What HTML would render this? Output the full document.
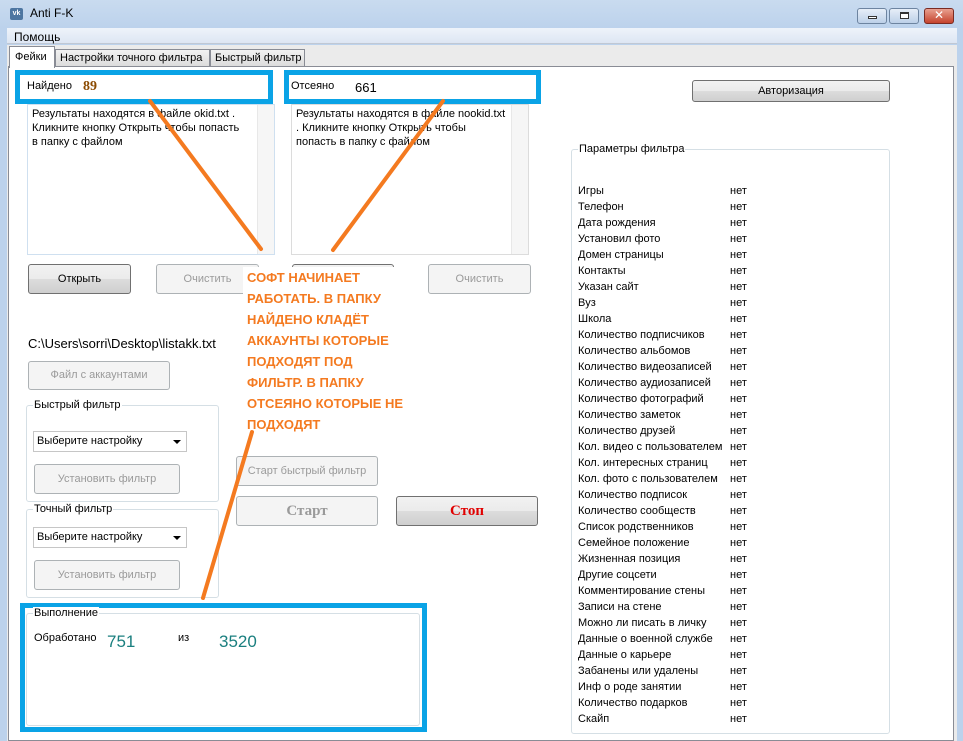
<!DOCTYPE html>
<html><head><meta charset="utf-8"><style>
*{box-sizing:border-box;margin:0;padding:0}
body{width:963px;height:741px;position:relative;overflow:hidden;background:#bcd2ec;font-family:"Liberation Sans","DejaVu Sans",sans-serif;font-size:11px;color:#000}
.a{position:absolute;white-space:nowrap}
.btn{position:absolute;border:1px solid #707070;border-radius:3px;background:linear-gradient(#f2f2f2,#ebebeb 50%,#dcdcdc 51%,#cfcfcf);text-align:center;font-size:11px}
.dis{position:absolute;border:1px solid #adb2b5;border-radius:3px;background:#f4f4f4;color:#9a9a9a;text-align:center;font-size:11px;white-space:nowrap}
.grp{position:absolute;border:1px solid #d5dfe5;border-radius:3px}
.grp .t{position:absolute;top:-7px;left:6px;background:#fff;padding:0 1px;white-space:nowrap}
.sel{position:absolute;border:1px solid #c6c6c6;background:#fff;padding:3px 3px;font-size:11px}
.sel:after{content:"";position:absolute;right:5px;top:8px;border:4px solid transparent;border-top:4px solid #000}
.blue{position:absolute;border:5px solid #0aa3e6}
.ta{position:absolute;border:1px solid #abadb3;background:#fff;padding:2px 4px;line-height:14px;font-size:11px}
.sb{position:absolute;right:0;top:0;bottom:0;width:17px;background:#f6f6f6;border-left:1px solid #e8e8e8}
.row{position:absolute;left:578px;font-size:11px;white-space:nowrap}
</style></head><body>
<div class="a" style="left:0;top:0;width:963px;height:28px;background:linear-gradient(#c9dbef,#bcd2ec)"></div>
<div class="a" style="left:10px;top:8px;width:13px;height:12px;background:#4d76a1;border-radius:2px;color:#fff;font-size:7px;font-weight:bold;line-height:12px;text-align:center">vk</div>
<div class="a" style="left:30px;top:6px;font-size:12px">Anti F-K</div>
<div class="a" style="left:857px;top:8px;width:30px;height:16px;border:1px solid #6d84a0;border-radius:3px;background:linear-gradient(#e6eef8,#bcd0e8)"><div class="a" style="left:10px;top:7px;width:9px;height:3px;background:#fff;border:1px solid #333"></div></div>
<div class="a" style="left:889px;top:8px;width:30px;height:16px;border:1px solid #6d84a0;border-radius:3px;background:linear-gradient(#e6eef8,#bcd0e8)"><div class="a" style="left:10px;top:3px;width:9px;height:7px;background:#fff;border:1px solid #333;border-top-width:2px"></div></div>
<div class="a" style="left:924px;top:8px;width:30px;height:16px;border:1px solid #7a2b22;border-radius:3px;background:linear-gradient(#e8a090,#c5432d);color:#fff;font-weight:bold;font-size:12px;line-height:13px;text-align:center">✕</div>
<div class="a" style="left:7px;top:28px;width:950px;height:16px;background:linear-gradient(#eef3fa,#dde6f3);border-bottom:1px solid #c0c8d4"></div>
<div class="a" style="left:14px;top:30px;font-size:12px">Помощь</div>
<div class="a" style="left:7px;top:45px;width:950px;height:696px;background:#ebebeb"></div>
<div class="a" style="left:8px;top:66px;width:946px;height:675px;background:#fff;border:1px solid #898c95"></div>
<div class="a" style="left:9px;top:46px;width:46px;height:22px;background:#fff;border:1px solid #898c95;border-bottom:none;padding:4px 5px;font-size:11px">Фейки</div>
<div class="a" style="left:55px;top:49px;width:155px;height:18px;background:linear-gradient(#f2f2f2,#dcdcdc);border:1px solid #898c95;padding:2px 4px">Настройки точного фильтра</div>
<div class="a" style="left:210px;top:49px;width:95px;height:18px;background:linear-gradient(#f2f2f2,#dcdcdc);border:1px solid #898c95;padding:2px 4px;overflow:hidden">Быстрый фильтр</div>

<div class="ta" style="left:27px;top:104px;width:248px;height:151px;border-color:#cfe0f0">Результаты находятся в файле okid.txt .<br>Кликните кнопку Открыть чтобы попасть<br>в папку с файлом<div class="sb"></div></div>
<div class="ta" style="left:291px;top:104px;width:238px;height:151px;border-color:#dcdcdc">Результаты находятся в файле nookid.txt<br>. Кликните кнопку Открыть чтобы<br>попасть в папку с файлом<div class="sb"></div></div>

<div class="blue" style="left:15px;top:70px;width:258px;height:34px;background:#fff"></div>
<div class="a" style="left:27px;top:80px">Найдено</div>
<div class="a" style="left:83px;top:79px;font-family:'Liberation Serif',serif;font-weight:bold;font-size:14px;color:#8b4a00">89</div>
<div class="blue" style="left:284px;top:70px;width:257px;height:34px;background:#fff"></div>
<div class="a" style="left:291px;top:80px">Отсеяно</div>
<div class="a" style="left:355px;top:80px;font-size:13px">661</div>

<div class="btn" style="left:28px;top:264px;width:103px;height:30px;line-height:28px">Открыть</div>
<div class="dis" style="left:156px;top:264px;width:103px;height:30px;line-height:28px">Очистить</div>
<div class="btn" style="left:292px;top:264px;width:102px;height:30px"></div>
<div class="dis" style="left:428px;top:264px;width:103px;height:30px;line-height:28px">Очистить</div>

<div class="a" style="left:28px;top:336px;font-size:13px">C:\Users\sorri\Desktop\listakk.txt</div>
<div class="dis" style="left:28px;top:361px;width:142px;height:29px;line-height:27px">Файл с аккаунтами</div>

<div class="grp" style="left:26px;top:405px;width:193px;height:97px"><span class="t">Быстрый фильтр</span></div>
<div class="sel" style="left:33px;top:431px;width:154px;height:21px">Выберите настройку</div>
<div class="dis" style="left:34px;top:464px;width:146px;height:30px;line-height:28px">Установить фильтр</div>
<div class="grp" style="left:26px;top:509px;width:193px;height:89px"><span class="t">Точный фильтр</span></div>
<div class="sel" style="left:33px;top:527px;width:154px;height:21px">Выберите настройку</div>
<div class="dis" style="left:34px;top:560px;width:146px;height:30px;line-height:28px">Установить фильтр</div>

<div class="dis" style="left:236px;top:456px;width:142px;height:30px;line-height:28px">Старт быстрый фильтр</div>
<div class="dis" style="left:236px;top:496px;width:142px;height:30px;line-height:28px;font-family:'Liberation Serif',serif;font-weight:bold;font-size:15px">Старт</div>
<div class="btn" style="left:396px;top:496px;width:142px;height:30px;line-height:28px;color:#e00000;font-family:'Liberation Serif',serif;font-weight:bold;font-size:15px">Стоп</div>

<div class="blue" style="left:20px;top:603px;width:407px;height:129px"></div>
<div class="grp" style="left:26px;top:613px;width:394px;height:113px"><span class="t">Выполнение</span></div>
<div class="a" style="left:34px;top:632px">Обработано</div>
<div class="a" style="left:107px;top:632px;font-size:17px;color:#1a7f7f">751</div>
<div class="a" style="left:178px;top:632px">из</div>
<div class="a" style="left:219px;top:632px;font-size:17px;color:#1a7f7f">3520</div>

<div class="btn" style="left:692px;top:80px;width:198px;height:22px;line-height:20px">Авторизация</div>
<div class="grp" style="left:571px;top:149px;width:319px;height:585px"><span class="t">Параметры фильтра</span></div>

<svg class="a" style="left:0;top:0" width="963" height="741"><g stroke="#f47a20" stroke-width="4" stroke-linecap="round">
<line x1="150" y1="101" x2="261" y2="249"/><line x1="443" y1="101" x2="333" y2="250"/><line x1="252" y1="432" x2="203" y2="598"/></g></svg>
<div class="a" style="left:243px;top:267px;width:165px;height:160px;background:#fff;color:#f47a20;font-weight:bold;font-size:13px;line-height:21px;padding-left:4px">СОФТ НАЧИНАЕТ<br>РАБОТАТЬ. В ПАПКУ<br>НАЙДЕНО КЛАДЁТ<br>АККАУНТЫ КОТОРЫЕ<br>ПОДХОДЯТ ПОД<br>ФИЛЬТР. В ПАПКУ<br>ОТСЕЯНО КОТОРЫЕ НЕ<br>ПОДХОДЯТ</div>

<div class="row" style="top:183px;line-height:16px">Игры<br>Телефон<br>Дата рождения<br>Установил фото<br>Домен страницы<br>Контакты<br>Указан сайт<br>Вуз<br>Школа<br>Количество подписчиков<br>Количество альбомов<br>Количество видеозаписей<br>Количество аудиозаписей<br>Количество фотографий<br>Количество заметок<br>Количество друзей<br>Кол. видео с пользователем<br>Кол. интересных страниц<br>Кол. фото с пользователем<br>Количество подписок<br>Количество сообществ<br>Список родственников<br>Семейное положение<br>Жизненная позиция<br>Другие соцсети<br>Комментирование стены<br>Записи на стене<br>Можно ли писать в личку<br>Данные о военной службе<br>Данные о карьере<br>Забанены или удалены<br>Инф о роде занятии<br>Количество подарков<br>Скайп</div>
<div class="row" style="left:730px;top:183px;line-height:16px">нет<br>нет<br>нет<br>нет<br>нет<br>нет<br>нет<br>нет<br>нет<br>нет<br>нет<br>нет<br>нет<br>нет<br>нет<br>нет<br>нет<br>нет<br>нет<br>нет<br>нет<br>нет<br>нет<br>нет<br>нет<br>нет<br>нет<br>нет<br>нет<br>нет<br>нет<br>нет<br>нет<br>нет</div>
</body></html>
